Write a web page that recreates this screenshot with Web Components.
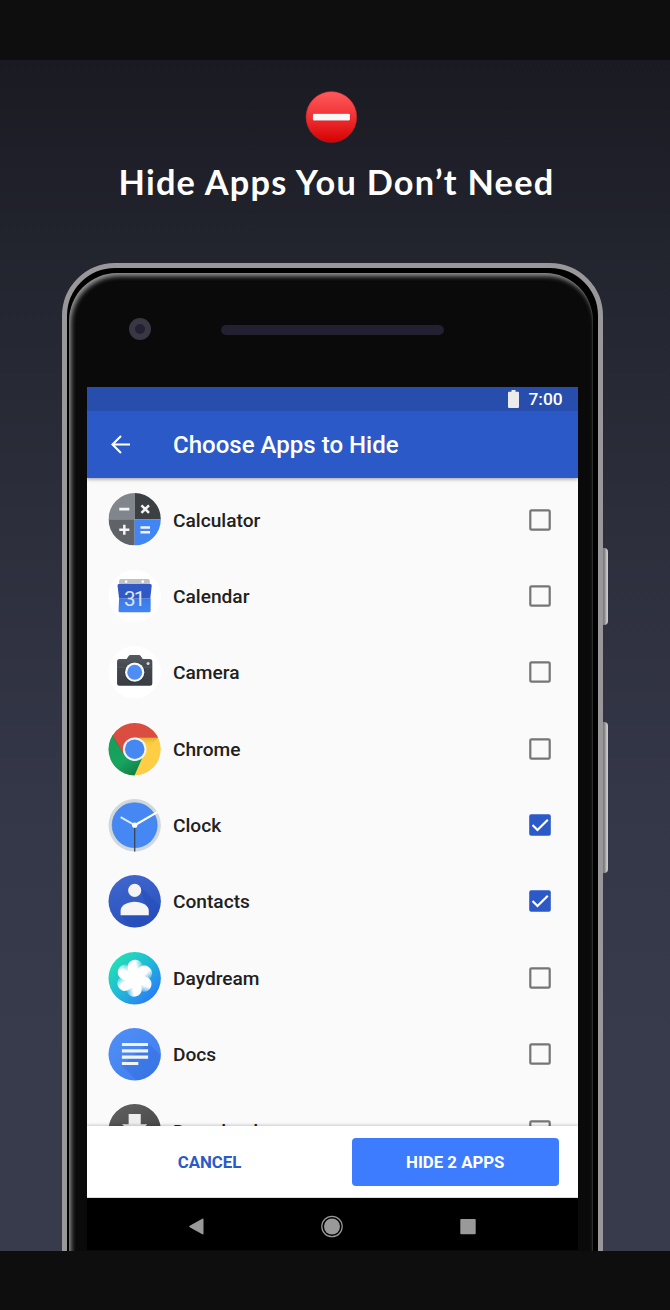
<!DOCTYPE html>
<html lang="en">
<head>
<meta charset="utf-8">
<title>Hide Apps</title>
<style>
html,body{margin:0;background:#0e0e0e}
body{width:670px;height:1310px;overflow:hidden;font-family:Roboto,"Liberation Sans",sans-serif}
</style>
</head>
<body>
<promo-poster>
  <promo-title slot="head">Hide Apps You Don’t Need</promo-title>
  <phone-frame>
    <status-bar>7:00</status-bar>
    <app-bar>Choose Apps to Hide</app-bar>
    <app-list>
      <app-row icon="calculator">Calculator</app-row>
      <app-row icon="calendar">Calendar</app-row>
      <app-row icon="camera">Camera</app-row>
      <app-row icon="chrome">Chrome</app-row>
      <app-row icon="clock" checked>Clock</app-row>
      <app-row icon="contacts" checked>Contacts</app-row>
      <app-row icon="daydream">Daydream</app-row>
      <app-row icon="docs">Docs</app-row>
      <app-row icon="downloads">Downloads</app-row>
    </app-list>
    <action-bar><span slot="cancel">CANCEL</span><span slot="confirm">HIDE 2 APPS</span></action-bar>
    <nav-bar></nav-bar>
  </phone-frame>
</promo-poster>
<script>
const define = (name, html) => customElements.define(name, class extends HTMLElement {
  constructor() {
    super();
    this.attachShadow({mode: 'open'}).innerHTML = typeof html === 'function' ? html(this) : html;
  }
});

define('promo-poster', `<style>
:host{display:block;padding:60px 0 59px}
main{height:1191px;overflow:hidden;display:flex;flex-direction:column;background:linear-gradient(#1a1a22 0,#22242e 190px,#2d2f3d 490px,#343748 740px,#383b4c 1000px,#383b4c)}
</style><main><slot name="head"></slot><slot></slot></main>`);

define('promo-title', `<style>
:host{display:flex;flex-direction:column;align-items:center;height:203px;flex:none;color:#fff}
svg{display:block;margin:31px 8px 0 0;width:52px;height:52px}
h1{margin:17px 0 0 3px;font:700 34.3px/44px Lato,sans-serif;letter-spacing:1.28px;white-space:nowrap}
</style>
<svg viewBox="-.4 0 52 52"><defs><linearGradient id="r" x2="0" y2="1"><stop stop-color="#ff5a5c"/><stop offset=".45" stop-color="#f23538"/><stop offset="1" stop-color="#d50000"/></linearGradient></defs>
<circle cx="26" cy="26" r="25.4" fill="url(#r)" stroke="#b9242a" stroke-width=".5"/><rect x="7.2" y="22.3" width="37.6" height="8" rx="1.3" fill="#b81c20" opacity=".6"/><rect x="7.5" y="22.7" width="37" height="6.9" rx="1" fill="#f8f8f8"/></svg>
<h1><slot></slot></h1>`);

define('phone-frame', `<style>
:host{display:block;position:relative;flex:none;box-sizing:border-box;width:541px;height:1100px;margin-left:62px;background:#000;border:5px solid #9a979a;border-radius:53px 53px 0 0;padding:5px 5px 0 2px}
.glass{height:1090px;background:#0a0a0a;border-radius:48px 48px 0 0;box-shadow:inset 2px 3px 5px #999,inset -1px 0 0 #191919}
.bezel{display:flex;align-items:center;height:113px;padding:0 0 1px 60px;gap:70px}
.cam{box-sizing:border-box;width:22px;height:22px;border-radius:50%;border:6px solid #393743;background:#232032;position:relative;top:-1px}
.spk{width:223px;height:10px;border-radius:5px;background:#232032}
.screen{width:491px;margin-left:18px;height:863px;display:flex;flex-direction:column;background:#fafafa;overflow:hidden}
.key{position:absolute;left:536px;width:5px;border-radius:0 4px 4px 0;background:linear-gradient(90deg,#777 0,#8b8b8b 35%,#bbb 65%,#cecece)}
.a{top:280px;height:77px}.b{top:454px;height:151px}
</style><i class="key a"></i><i class="key b"></i>
<div class="glass"><div class="bezel"><div class="cam"></div><div class="spk"></div></div><div class="screen"><slot></slot></div></div>`);

define('status-bar', `<style>
:host{display:flex;flex:none;box-sizing:border-box;height:24px;background:#274dad;color:#fff;align-items:center;justify-content:flex-end;gap:9px;padding-right:15.300px;font:500 17.4px/24px Roboto,sans-serif}
svg{width:11px;height:18px;margin-top:-1px}
</style><svg viewBox="0 0 11 18"><path d="M3.5 0h4v1.7H10a1 1 0 0 1 1 1V17a1 1 0 0 1-1 1H1a1 1 0 0 1-1-1V2.700a1 1 0 0 1 1-1h2.500z" fill="#ebebeb"/></svg><span><slot></slot></span>`);

define('app-bar', `<style>
:host{display:flex;flex:none;position:relative;z-index:1;box-sizing:border-box;height:66.500px;padding:0 24px;align-items:center;gap:43px;background:#2c59c8;color:#fff;box-shadow:0 1px 4px #0006;clip-path:inset(0 0 -8px 0);font:500 24.050px/30px Roboto,sans-serif}
svg{width:19px;height:19px;flex:none}span{padding-top:1px}
</style><svg viewBox="0 0 19 19" fill="none" stroke="#fff" stroke-width="2.1"><path d="M19 9.500H1.500M10 1L1.500 9.500 10 18"/></svg><span><slot></slot></span>`);

define('app-list', `<style>
:host{display:block;flex:1;min-height:0;overflow:hidden;padding-top:3.850px}
</style><slot></slot>`);

const icons = {
calculator: `<g clip-path="url(#c)"><path fill="#80868b" d="M0 0h26v26H0z"/><path fill="#3c4043" d="M26 0h26v26H26z"/><path fill="#5f6368" d="M0 26h26v26H0z"/><path fill="#4285f4" d="M26 26h26v26H26z"/></g><path d="M10.700 16h10M10.700 36.500h10M15.700 31.500v10M31.700 34.300h9.500M31.700 39h9.500M32.700 12.200l7.500 7.500M40.200 12.200l-7.500 7.500" stroke="#f3f4f5" stroke-width="2.500" fill="none"/>`,
calendar: `<defs><linearGradient id="g" x2="0" y2="1"><stop stop-color="#3b78e7"/><stop offset="1" stop-color="#4285f4"/></linearGradient></defs><circle cx="26" cy="26" r="26" fill="#fff"/><path d="M12.500 9H39a2 2 0 0 1 2 2v5H10.500v-5a2 2 0 0 1 2-2z" fill="#bfc2c1"/><circle cx="17.500" cy="11.500" r="1.300" fill="#fff"/><circle cx="34" cy="11.500" r="1.300" fill="#fff"/><path d="M10.500 28h31.300v12.500a1.500 1.500 0 0 1-1.500 1.500H11.500a1.500 1.500 0 0 1-1.500-1.500z" fill="url(#g)"/><path d="M10.500 14h31a1.400 1.400 0 0 1 1.400 1.600L41.500 28h-31L9 15.600A1.400 1.400 0 0 1 10.500 14z" fill="#3159c5"/><text x="26" y="35.600" text-anchor="middle" font-family="Roboto" font-size="20.500" font-weight="400" fill="#dde6f8" textLength="21">31</text>`,
camera: `<defs><linearGradient id="g" x2="0" y2="1"><stop stop-color="#555c61"/><stop offset=".4" stop-color="#43484f"/><stop offset="1" stop-color="#393c42"/></linearGradient></defs><circle cx="26" cy="26" r="26" fill="#fff"/><path d="M11 13h7l2-3a2 2 0 0 1 2-1h8a2 2 0 0 1 2 1l2 3h7a2.500 2.500 0 0 1 2.500 2.500V37a2.500 2.500 0 0 1-2.500 2.500H11A2.500 2.500 0 0 1 8.500 37V15.500A2.500 2.500 0 0 1 11 13z" fill="url(#g)"/><path d="M8.500 21h35" stroke="#6a7077" stroke-width=".5"/><circle cx="26" cy="26.300" r="10.300" fill="#292c31" opacity=".6"/><circle cx="26" cy="26" r="9.600" fill="#f8f9fa"/><circle cx="26" cy="26" r="7.400" fill="#4f8df5"/><circle cx="39.300" cy="17.300" r="1.500" fill="#d6d9dc"/>`,
chrome: `<defs><linearGradient id="g" x1="0" x2=".6" y2="1"><stop stop-color="#149c5a"/><stop offset=".7" stop-color="#18a45f"/><stop offset="1" stop-color="#10834a"/></linearGradient><linearGradient id="s" x2="0" y2="1"><stop stop-color="#c79a20" stop-opacity=".65"/><stop offset="1" stop-color="#ffcd46" stop-opacity="0"/></linearGradient></defs><g clip-path="url(#c)"><circle cx="26" cy="26" r="26" fill="#ffce44"/><path d="M26 14.500h23.400L42 23z" fill="url(#s)"/><path d="M-2 8L4.300 11.500 16 31.700 25.500 38l9.200-6L25 54-5 50z" fill="url(#g)"/><path d="M4 12.500L12-4h32l5.200 18.700H26L16 32z" fill="#db4d41"/><path d="M4 12.500L16 32" stroke="#a82e2a" stroke-width=".7" opacity=".5"/></g><circle cx="26" cy="26" r="11.700" fill="#f3f4f5"/><circle cx="26" cy="26" r="9.700" fill="#4688f1"/>`,
clock: `<circle cx="26" cy="26" r="26" fill="#cfd8dc"/><circle cx="26" cy="26" r="22.400" fill="#4688f3" stroke="#3c77d9" stroke-width=".5"/><path d="M26 26v26" stroke="#394656" stroke-width="1.300"/><path d="M26 26L12 18" stroke="#dce8fb" stroke-width="2"/><path d="M26 26l22.500-13" stroke="#fff" stroke-width="2.200"/><circle cx="26" cy="26" r="2.600" fill="#fff"/>`,
contacts: `<defs><linearGradient id="g" x2=".3" y2="1"><stop stop-color="#4169cf"/><stop offset="1" stop-color="#2a51bd"/></linearGradient></defs><circle cx="26" cy="26" r="26" fill="url(#g)"/><path clip-path="url(#c)" d="M31 11l21 21v20H24L12 40h28z" fill="#234bb7" opacity=".5"/><circle cx="26" cy="15.300" r="6.500" fill="#f5f5f5"/><path d="M12 40v-4.500c0-5.500 7-9 14-9s14 3.500 14 9V40z" fill="#f5f5f5"/>`,
daydream: `<defs><linearGradient id="g" x1=".1" y1=".1" x2=".9" y2=".9"><stop stop-color="#23e2b2"/><stop offset=".5" stop-color="#20b8d8"/><stop offset="1" stop-color="#2c76fb"/></linearGradient><linearGradient id="p" x1="0" y1=".6" x2="1" y2=".3"><stop offset=".6" stop-color="#fff"/><stop offset="1" stop-color="#fff" stop-opacity=".25"/></linearGradient></defs><circle cx="26" cy="26" r="26" fill="url(#g)"/>${[0,60,120,180,240,300].map(a=>`<path transform="rotate(${a} 26 26)" d="M26 28C20.500 23.500 17.800 17 19.500 12.200c2.200-5.700 11-6.200 13.700-.700 1.500 3.500-.3 8-3.700 10.500z" fill="url(#p)"/>`).join('')}<circle cx="26" cy="26" r="8.500" fill="#fff"/>`,
docs: `<defs><linearGradient id="g" x2="1" y2="1"><stop stop-color="#5290f6"/><stop offset="1" stop-color="#3d7cee"/></linearGradient></defs><circle cx="26" cy="26" r="26" fill="url(#g)"/><path clip-path="url(#c)" d="M39.500 15L54 29.500V54H30L13.300 37.300z" fill="#2c60d0" opacity=".3"/><path d="M13.300 16.400h26M13.300 22.700h26M13.300 28.900h26M13.300 35.200h16.300" stroke="#f1f3f5" stroke-width="3"/>`,
downloads: `<defs><linearGradient id="g" x2=".5" y2="1"><stop stop-color="#626262"/><stop offset="1" stop-color="#414141"/></linearGradient></defs><circle cx="26" cy="26" r="26" fill="url(#g)"/><path d="M20 10h12v10h6.500L26 33 13.500 20H20z" fill="#eee"/>`
};

define('app-icon', el => `<style>
:host{display:block;flex:none;width:52.400px;height:52.400px}svg{display:block;width:100%;height:100%;overflow:visible}
</style><svg viewBox=".5 0 52 52"><clipPath id="c"><circle cx="26" cy="26" r="26"/></clipPath>${icons[el.getAttribute('name')] || ''}</svg>`);

define('check-box', el => `<style>
:host{display:block;flex:none;width:22px;height:22px}svg{display:block}
</style><svg width="22" height="22" viewBox="0 0 22 22">${el.hasAttribute('on')
 ? '<rect x=".2" y=".2" width="21.600" height="21.600" rx="2" fill="#2c59c8"/><path d="M3.500 11l5 5L18.800 5.700" fill="none" stroke="#fff" stroke-width="2.200"/>'
 : '<rect x="1.300" y="1.300" width="19.400" height="19.400" rx="1.200" fill="none" stroke="#757575" stroke-width="2.200"/>'}</svg>`);

define('app-row', el => `<style>
:host{display:flex;align-items:center;height:76.400px;padding:0 27px 0 21.600px;color:#212121;font:500 19.150px/24px Roboto,sans-serif}
span{flex:1;padding:2px 0 0 12px}
</style><app-icon name="${el.getAttribute('icon')}"></app-icon><span><slot></slot></span><check-box ${el.hasAttribute('checked') ? 'on' : ''}></check-box>`);

define('action-bar', `<style>
:host{display:flex;flex:none;position:relative;box-sizing:border-box;height:72px;padding:1px 19px 0;align-items:center;background:#fff;box-shadow:0 -1px 3px #0003;border-bottom:1px solid #ddd;font:700 16.800px/20px Roboto,sans-serif}
div{flex:none;display:flex;align-items:center;justify-content:center;height:48px;padding-top:1px;box-sizing:border-box}
.c{width:207px;color:#2c59c8}.h{width:207.500px;margin-left:auto;background:#3d7cff;color:#fff;border-radius:4px}
</style><div class="c"><slot name="cancel"></slot></div><div class="h"><slot name="confirm"></slot></div>`);

define('nav-bar', `<style>
:host{display:flex;flex:none;box-sizing:border-box;height:52.500px;padding:5px 98.500px 0 97.500px;align-items:center;justify-content:space-between;background:#000}
svg{display:block;width:24px;height:24px}
</style><svg viewBox="0 -.5 24 24"><path d="M4.700 11.200L17.300 4.200q1.200-.5 1.200.8v14q0 1.300-1.200.8L4.700 12.800q-1.200-.8 0-1.600z" fill="#999"/></svg><svg viewBox="0 -.5 24 24"><circle cx="12" cy="12" r="10.200" fill="none" stroke="#999" stroke-width="1.200"/><circle cx="12" cy="12" r="8" fill="#999"/></svg><svg viewBox="0 -.5 24 24"><rect x="4.300" y="4.500" width="15.400" height="15.200" rx=".8" fill="#999"/></svg>`);
</script>
</body>
</html>
